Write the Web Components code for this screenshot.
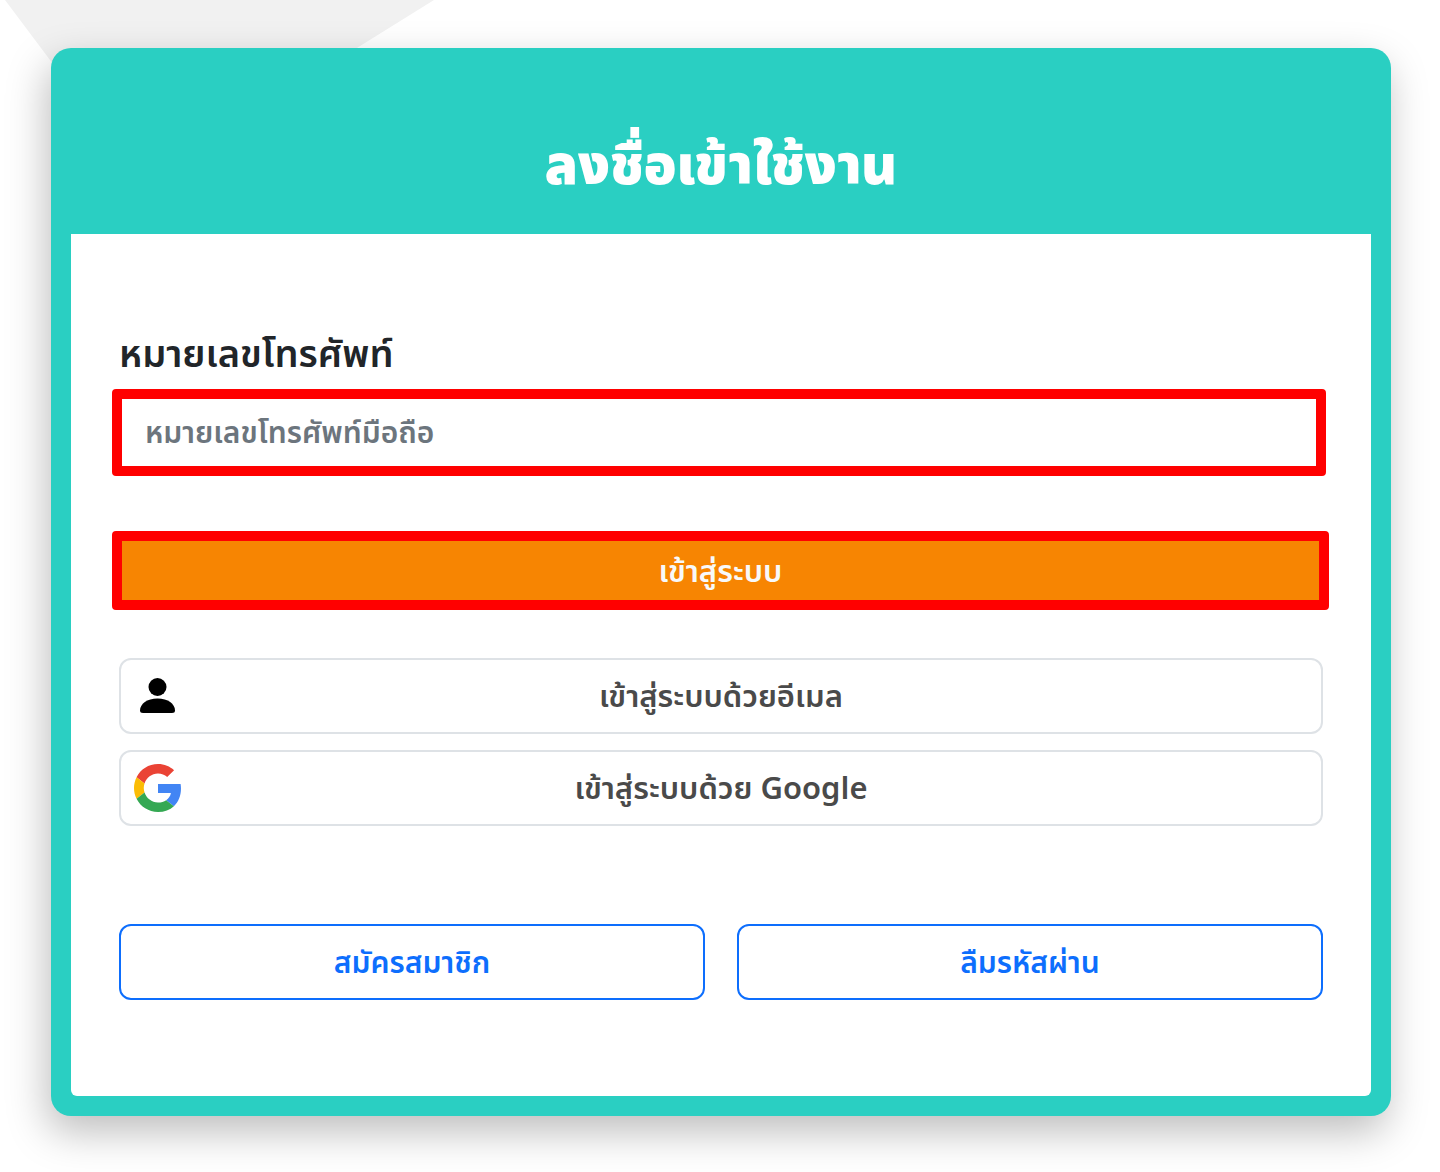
<!DOCTYPE html>
<html lang="th">
<head>
<meta charset="utf-8">
<title>ลงชื่อเข้าใช้งาน</title>
<style>
  body {
    margin: 0;
    min-height: 100vh;
    background: #fff;
    color: #212529;
    font-family: "Noto Sans Thai", "Noto Sans", sans-serif;
    font-size: 30px;
    line-height: 44px;
    font-weight: 600;
  }
</style>
</head>
<body>
<login-page></login-page>

<script>
const define = (name, html) => customElements.define(name, class extends HTMLElement {
  constructor() {
    super();
    const template = document.createElement('template');
    template.innerHTML = '<style>*{box-sizing:border-box}</style>' + html;
    this.attachShadow({ mode: 'open' }).append(template.content.cloneNode(true));
  }
});

define('page-backdrop', `
  <style>
    :host { display: block; position: absolute; top: 0; left: 0; z-index: -1; }
    svg { display: block; }
  </style>
  <svg width="434" height="120" viewBox="0 0 434 120" aria-hidden="true">
    <path d="M5 0H434L241 120H95Z" fill="#f1f1f1"/>
  </svg>`);

define('login-card', `
  <style>
    :host {
      display: block;
      padding: 0 20px 20px;
      border-radius: 20px;
      background: #2acfc2;
      box-shadow: -4px 16px 40px rgba(0, 0, 0, .26);
    }
    header { padding: 78px 0 24px; text-align: center; }
    h1 { margin: 0; color: #fff; font-size: 54px; line-height: 84px; font-weight: 900; }
    .body { padding: 96px 48px; background: #fff; border-radius: 0 0 6px 6px; }
  </style>
  <header><h1><slot name="title"></slot></h1></header>
  <div class="body"><slot></slot></div>`);

define('phone-field', `
  <style>
    :host { display: block; }
    label { display: block; font-size: 38px; line-height: 52px; }
    input {
      display: block;
      width: calc(100% + 10px);
      height: 87px;
      margin: 7px -3px 0 -7px;
      padding: 2px 23px 0;
      border: 10px solid #f00;
      border-radius: 4px;
      background: #fff;
      color: #212529;
      font: inherit;
      outline: 0;
    }
    input::placeholder { color: #6c757d; opacity: 1; }
  </style>
  <label for="phone">หมายเลขโทรศัพท์</label>
  <input id="phone" type="tel" placeholder="หมายเลขโทรศัพท์มือถือ">`);

define('submit-button', `
  <style>
    :host { display: block; margin: 0 -6px 0 -7px; }
    button {
      display: block;
      width: 100%;
      height: 79px;
      padding: 4px 0 0;
      border: 10px solid #f00;
      border-radius: 4px;
      background: #f78502;
      color: #f8f9fa;
      font: inherit;
      font-size: 31px;
      cursor: pointer;
    }
  </style>
  <button type="submit"><slot></slot></button>`);

define('provider-button', `
  <style>
    :host { display: block; }
    button {
      display: grid;
      grid-template-columns: 48px 1fr 48px;
      align-items: center;
      width: 100%;
      height: 76px;
      padding: 0 13px;
      border: 2px solid #dee2e6;
      border-radius: 12px;
      background: #fff;
      color: #4a4a4a;
      font: inherit;
      font-size: 31px;
      cursor: pointer;
    }
    .icon { display: grid; place-items: center; }
    .text { padding-top: 4px; }
  </style>
  <button type="button"><span class="icon"><slot name="icon"></slot></span><span class="text"><slot></slot></span></button>`);

define('user-icon', `
  <style>:host, svg { display: block; }</style>
  <svg width="36" height="36" viewBox="0 0 36 36" aria-hidden="true">
    <circle cx="17.500" cy="9" r="9"/>
    <path d="M0 32.500C0 26 7 20.500 17.500 20.500S35 26 35 32.500Q35 35 32 35H3Q0 35 0 32.500Z"/>
  </svg>`);

define('google-icon', `
  <style>:host, svg { display: block; }</style>
  <svg width="48" height="48" viewBox="0 0 48 48" aria-hidden="true">
    <path fill="#EA4335" d="M24 9.500c3.540 0 6.710 1.220 9.210 3.600l6.850-6.850C35.900 2.380 30.470 0 24 0 14.620 0 6.510 5.380 2.560 13.220l7.980 6.190C12.430 13.720 17.740 9.500 24 9.500z"/>
    <path fill="#4285F4" d="M46.980 24.550c0-1.570-.15-3.090-.38-4.550H24v9.020h12.940c-.58 2.960-2.260 5.480-4.780 7.180l7.730 6c4.510-4.180 7.090-10.360 7.090-17.650z"/>
    <path fill="#FBBC05" d="M10.530 28.590c-.48-1.450-.76-2.990-.76-4.590s.27-3.140.76-4.590l-7.980-6.190C.92 16.460 0 20.120 0 24c0 3.880.92 7.540 2.560 10.780l7.970-6.190z"/>
    <path fill="#34A853" d="M24 48c6.480 0 11.930-2.130 15.890-5.810l-7.730-6c-2.150 1.450-4.920 2.300-8.160 2.300-6.260 0-11.570-4.220-13.470-9.910l-7.980 6.190C6.510 42.620 14.620 48 24 48z"/>
  </svg>`);

define('outline-button', `
  <style>
    :host { display: block; flex: 1; }
    button {
      display: block;
      width: 100%;
      height: 76px;
      padding: 4px 0 0;
      border: 2px solid #0d6efd;
      border-radius: 12px;
      background: #fff;
      color: #0d6efd;
      font: inherit;
      cursor: pointer;
    }
  </style>
  <button type="button"><slot></slot></button>`);

define('login-page', `
  <style>
    :host { display: block; position: relative; z-index: 0; padding: 48px 49px 56px 51px; }
    form { display: flex; flex-direction: column; }
    submit-button { margin-top: 55px; }
    .providers { display: flex; flex-direction: column; gap: 16px; margin-top: 48px; }
    .links { display: flex; gap: 32px; margin-top: 98px; }
  </style>
  <page-backdrop></page-backdrop>
  <login-card>
    <span slot="title">ลงชื่อเข้าใช้งาน</span>
    <form>
      <phone-field></phone-field>
      <submit-button>เข้าสู่ระบบ</submit-button>
      <div class="providers">
        <provider-button><user-icon slot="icon"></user-icon>เข้าสู่ระบบด้วยอีเมล</provider-button>
        <provider-button><google-icon slot="icon"></google-icon>เข้าสู่ระบบด้วย Google</provider-button>
      </div>
      <div class="links">
        <outline-button>สมัครสมาชิก</outline-button>
        <outline-button>ลืมรหัสผ่าน</outline-button>
      </div>
    </form>
  </login-card>`);
</script>
</body>
</html>
